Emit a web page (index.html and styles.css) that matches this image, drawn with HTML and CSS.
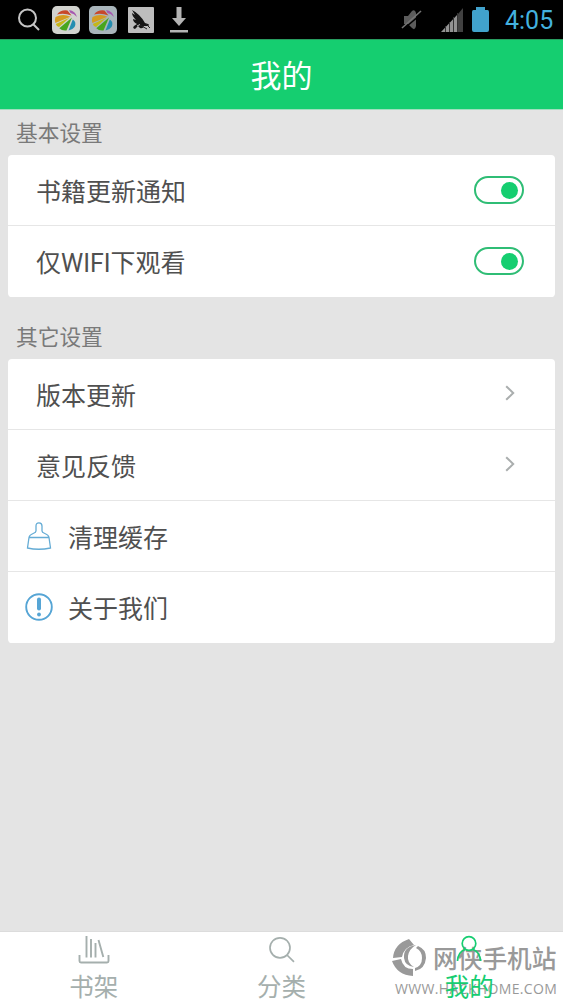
FILE: index.html
```html
<!DOCTYPE html>
<html lang="zh-CN">
<head>
<meta charset="utf-8">
<title>我的</title>
<link rel="stylesheet" href="styles.css">
</head>
<body>
<svg class="defs" width="0" height="0">
  <symbol id="pinwheel" viewBox="0 0 28 28">
    <rect width="28" height="28" rx="5"/>
    <path d="M5 8.500Q9 3.500 15.500 4.500L19.500 9.500Q12 6.500 5 8.500Z" fill="#c8482b"/>
    <path d="M3.500 11Q11 7 18.500 10.700L3.300 17Q2.500 13.500 3.500 11Z" fill="#d59c20"/>
    <path d="M17.500 11.800L7 21Q4.500 20.500 3.800 18Z" fill="#c5b719"/>
    <path d="M20 11.500L14.500 24.500Q10 25 7.300 22.300Z" fill="#48a61f"/>
    <path d="M20.800 13.500Q25 16 22.500 21Q20.500 24 16.500 24.500Z" fill="#258eb1"/>
    <path d="M17 4Q23.500 5 25 11Q22 7.500 18.500 7Z" fill="#a659b0"/>
  </symbol>
</svg>
<div class="screen">
  <div class="status">
    <div class="status-left">
      <svg width="22" height="24" viewBox="0 0 22 24" fill="none" stroke="#c4c4c4" stroke-width="2"><circle cx="9.5" cy="10" r="8.5"/><path d="M15.5 16.5L21 22"/></svg>
      <svg class="app" width="28" height="28"><use href="#pinwheel" fill="#d2d3cf"/></svg>
      <svg class="app" width="28" height="28"><use href="#pinwheel" fill="#a9b5bb"/></svg>
      <svg class="bird" width="26" height="26" viewBox="0 0 26 26"><rect width="26" height="26" rx="1" fill="#bdbdbd"/><path d="M4 3Q12 7 17 16L20 17Q22 18 20 19L16 19Q15 22 12 21L10 19L7 22Q4 21 6 19L9 17Q5 15 5 12L8 13Q4 9 4 6L7 8Z" fill="#151515"/><path d="M12 18L19 22M18 17L22 21" stroke="#222"/><path d="M9 19L12 17.500" stroke="#bdbdbd"/></svg>
      <svg class="down" width="20" height="26" viewBox="0 0 20 26" fill="#b4b4b4"><path d="M7.5 0H12.5V11H17L10 19L3 11H7.5ZM1 23H19V25.5H1Z"/></svg>
    </div>
    <div class="status-right">
      <svg class="mute" width="22" height="24" viewBox="0 0 22 24"><path d="M3 8H7L11 3Q14 1 15 5V18Q14 23 11 20L7 16H3Z" fill="#5c5c5c"/><path d="M2 21.500L22 4.500" stroke="#000" stroke-width="1.500"/><path d="M1 20L20 3" fill="none" stroke="#757575" stroke-width="1.6"/></svg>
      <svg class="signal" width="22" height="24" viewBox="0 0 22 24"><path d="M0 24L16 7V24Z" fill="#929292"/><path d="M17 6L22 0V24H17Z" fill="#414141"/><path d="M4.5 18V24M8.5 14V24M12.5 9V24M16.5 5V24" stroke="#333"/></svg>
      <svg width="17" height="25" viewBox="0 0 17 25"><path d="M4 0H13V3H15.5Q17 3 17 5V23Q17 25 15 25H2Q0 25 0 23V5Q0 3 1.5 3H4Z" fill="#41a2cc"/></svg>
      <span class="clock">4:05</span>
    </div>
  </div>
  <header class="header">我的</header>
  <main class="content">
    <h2 class="label">基本设置</h2>
    <section class="card">
      <div class="row"><span>书籍更新通知</span><i class="toggle"></i></div>
      <div class="row"><span>仅WIFI下观看</span><i class="toggle"></i></div>
    </section>
    <h2 class="label label-second">其它设置</h2>
    <section class="card">
      <div class="row"><span>版本更新</span><svg class="chevron" width="10" height="16" viewBox="0 0 10 16"><path d="M1.2 1.2L8.2 8L1.2 14.8"/></svg></div>
      <div class="row"><span>意见反馈</span><svg class="chevron" width="10" height="16" viewBox="0 0 10 16"><path d="M1.2 1.2L8.2 8L1.2 14.8"/></svg></div>
      <div class="row row-icon"><svg width="28" height="28" viewBox="0 0 28 28" fill="none" stroke="#65acd5" stroke-width="1.3"><path d="M11 9V4Q11 .8 14 .8Q17 .8 17 4V9C17 12 23.5 11 24 15.5H4C4.500 11 11 12 11 9ZM4 15.500L2.500 26Q13.500 28.500 25.500 26L24 15.500"/></svg><span>清理缓存</span></div>
      <div class="row row-icon"><svg width="28" height="28" viewBox="0 0 28 28" fill="none" stroke="#56a5d5"><circle cx="14" cy="14" r="12.8" stroke-width="1.9"/><path d="M14 6.500V15.500" stroke-width="4" stroke-linecap="round"/><circle cx="14" cy="21.500" r="1.900" fill="#56a5d5" stroke="none"/></svg><span>关于我们</span></div>
    </section>
  </main>
  <nav class="tabs">
    <div class="tab"><svg width="32" height="30" viewBox="0 0 32 30" fill="none" stroke="#a5afad" stroke-width="1.9"><path d="M1.500 20V26Q1.500 27.500 3 27.500H29Q30.500 27.500 30.500 26V20M8.500 1V22.500M13 4V22.500M17.500 8V22.500M20.500 5L25.300 22"/></svg><span>书架</span></div>
    <div class="tab"><svg width="32" height="30" viewBox="0 0 32 30" fill="none" stroke="#a5afad" stroke-width="1.700"><circle cx="14" cy="12.800" r="10"/><path d="M21 20L28 26.800"/></svg><span>分类</span></div>
    <div class="tab active"><svg width="32" height="30" viewBox="0 0 32 30" fill="none" stroke="#16cd71" stroke-width="1.700"><circle cx="16" cy="8.500" r="6.800"/><path d="M4.500 26Q5 17 12 14.500M20 14.500Q27 17 27.500 26"/></svg><span>我的</span></div>
  </nav>
  <div class="watermark">
    <svg class="mark" width="36" height="38" viewBox="0 0 36 38" fill="#999"><path d="M17 0L22 6Q12 8 10 18L1 19Q2 5 17 0Z"/><path d="M0 22L9 20Q11 30 21 30V37Q5 36 0 22Z"/><path d="M24 6Q11 8 12 19Q13 27 22 28Q15 24 16 17Q17 10 24 6Z"/><path d="M26 7Q34 10 34 19Q33 30 23 32V29Q30 27 30 19Q30 12 24 9Z"/></svg>
    <span class="site">网侠手机站</span>
    <span class="url">WWW.HACKHOME.COM</span>
  </div>
</div>
</body>
</html>
```
FILE: styles.css
```css
* { box-sizing: border-box; }
body { margin: 0; background: #e4e4e4; font-family: Roboto, "Noto Sans CJK SC", sans-serif; }
svg { flex: none; }
.defs { position: absolute; }
.screen { position: relative; display: flex; flex-direction: column; width: 563px; height: 1002px; overflow: hidden; }
.status { display: flex; justify-content: space-between; height: 39px; padding: 0 10px 0 18px; background: #000; }
.status-left, .status-right { display: flex; align-items: center; }
.status-left .app { margin-left: 12px; }
.status-left .app + .app { margin-left: 9px; }
.status-left .bird { margin-left: 11px; }
.status-left .down { margin-left: 15px; }
.status-right .signal { margin: 0 9px 0 18px; }
.clock { width: 48px; margin-left: 16px; color: #43b1df; font-size: 25px; line-height: 39px; white-space: nowrap; padding-top: 2px; }
.header { height: 71px; padding-top: 2px; border-top: 1px solid #279c5f; border-bottom: 1px solid #a0dfbe; background: #15ce70; color: #fff; font-size: 31px; line-height: 69px; text-align: center; }
.content { flex: 1; padding: 0 8px; }
.label { height: 45px; margin: 0; padding: 1px 0 0 8px; color: #7a7a7a; font-size: 21.700px; font-weight: 400; line-height: 45px; }
.label-second { height: 62px; padding-top: 18px; }
.card { overflow: hidden; border-radius: 4px; background: #fff; }
.row { display: flex; align-items: center; justify-content: space-between; height: 71px; padding: 0 31px 0 28px; border-bottom: 1px solid #e6e6e6; color: #505050; font-size: 25px; }
.row > span { margin-top: -1px; }
.row:last-child { border-bottom-color: #fff; }
.row-icon { justify-content: flex-start; gap: 15px; padding-left: 17px; }
.toggle { position: relative; width: 50px; height: 28px; border: 2px solid #2fbd75; border-radius: 14px; }
.toggle::after { content: ""; position: absolute; top: 3.500px; right: 4px; width: 17px; height: 17px; border-radius: 50%; background: #15ce70; }
.chevron { margin: -2px 9px 0 0; fill: none; stroke: #aaaeae; stroke-width: 2; }
.tabs { display: flex; height: 71px; border-top: 1px solid #dcdcdc; background: #fff; }
.tab { display: flex; flex: 1; flex-direction: column; align-items: center; gap: 5px; padding-top: 3px; color: #a5afad; font-size: 24.500px; line-height: 36px; }
.tab.active { position: relative; z-index: 1; color: #16cd71; }
.watermark { position: absolute; left: 392px; top: 938px; width: 168px; height: 62px; color: #999; }
.mark { position: absolute; left: 0; top: 1px; }
.site { position: absolute; left: 41px; top: 4px; font-size: 24.700px; font-weight: 500; line-height: 36px; white-space: nowrap; }
.url { position: absolute; left: 3px; top: 42px; font-family: "Open Sans", sans-serif; font-size: 14px; letter-spacing: 0.350px; line-height: 18px; white-space: nowrap; }
```
